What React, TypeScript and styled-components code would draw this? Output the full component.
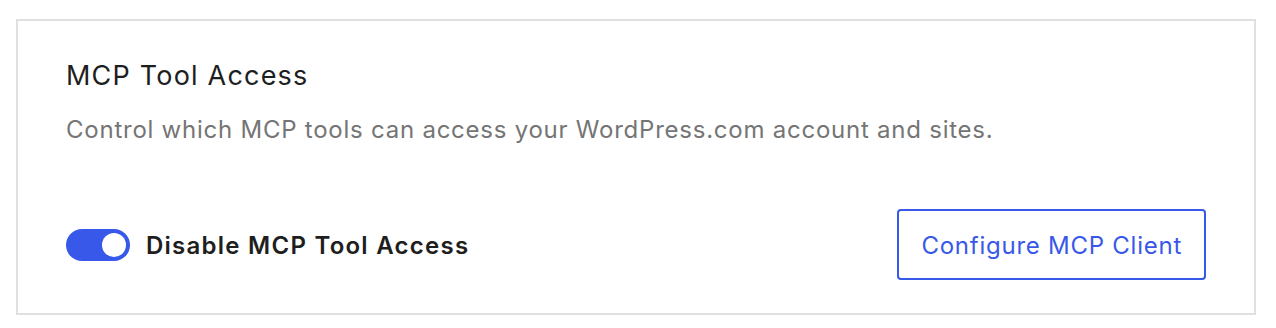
import styled, { createGlobalStyle } from 'styled-components'

const GlobalStyle = createGlobalStyle`
  body {
    margin: 0;
    background: #fff;
    font-family: Inter, "Liberation Sans", sans-serif;
  }
`

const Page = styled.div`
  padding: 19px 20px 13px 16px;
`

const Card = styled.section`
  border: 2px solid #e0e0e0;
  box-sizing: border-box;
  width: 1240px;
  height: 296px;
  padding: 39px 48px 33px 48px;
  display: flex;
  flex-direction: column;
`

const Title = styled.h2`
  margin: 0;
  font-size: 27px;
  font-weight: 400;
  letter-spacing: 1.2px;
  color: #1e1e1e;
  line-height: 32px;
`

const Description = styled.p`
  margin: 22px 0 0;
  font-size: 24px;
  line-height: 32px;
  letter-spacing: 0.76px;
  color: #757575;
`

const Footer = styled.div`
  margin-top: auto;
  display: flex;
  align-items: center;
  justify-content: space-between;
`

const ToggleRow = styled.label`
  display: flex;
  align-items: center;
  gap: 16px;
  cursor: pointer;
`

const Track = styled.span<{ $on: boolean }>`
  position: relative;
  width: 64px;
  height: 32px;
  border-radius: 16px;
  background: ${p => (p.$on ? '#3858e9' : '#949494')};

  &::after {
    content: "";
    position: absolute;
    top: 4px;
    left: ${p => (p.$on ? '36px' : '4px')};
    width: 24px;
    height: 24px;
    border-radius: 50%;
    background: #fff;
  }
`

const ToggleLabel = styled.span`
  font-size: 24px;
  font-weight: 600;
  letter-spacing: 1.25px;
  color: #1e1e1e;
  padding-top: 2px;
`

const OutlineButton = styled.button`
  height: 71px;
  padding: 2px 22px 0;
  border: 2px solid #3858e9;
  border-radius: 4px;
  background: #fff;
  color: #3858e9;
  font-family: inherit;
  font-size: 24px;
  letter-spacing: 0.75px;
  cursor: pointer;
`

export default function App() {
  return (
    <>
      <GlobalStyle />
      <Page>
        <Card>
          <Title>MCP Tool Access</Title>
          <Description>
            Control which MCP tools can access your WordPress.com account and sites.
          </Description>
          <Footer>
            <ToggleRow>
              <Track $on />
              <ToggleLabel>Disable MCP Tool Access</ToggleLabel>
            </ToggleRow>
            <OutlineButton>Configure MCP Client</OutlineButton>
          </Footer>
        </Card>
      </Page>
    </>
  )
}
